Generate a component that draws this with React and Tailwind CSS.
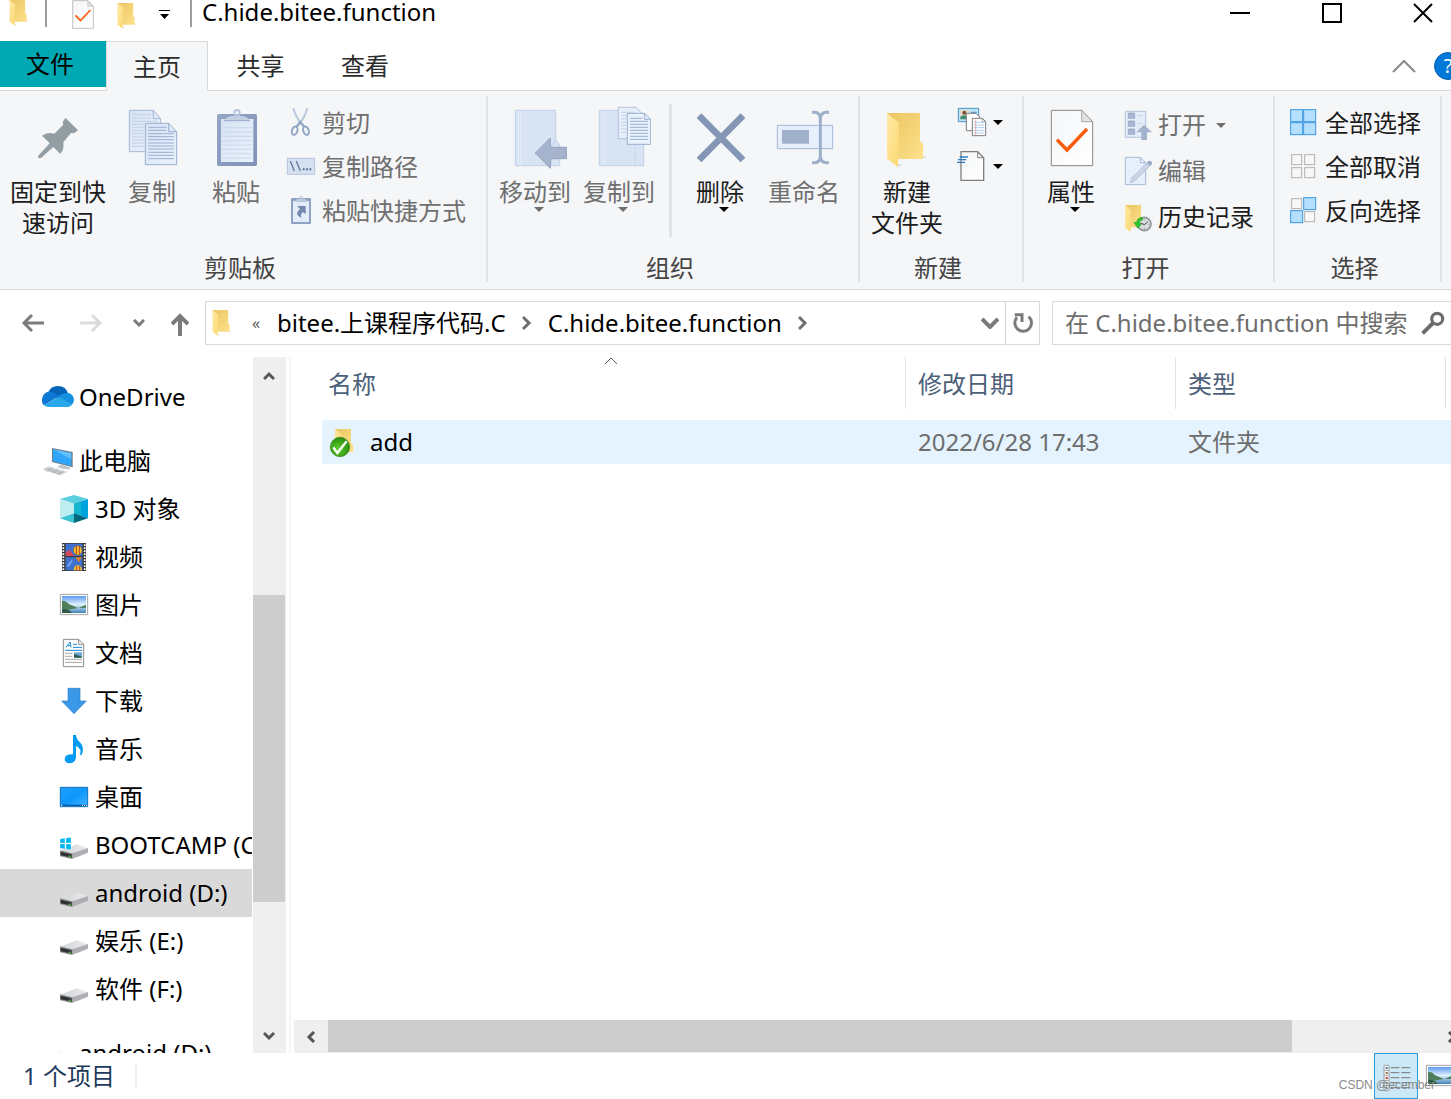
import clsx from 'clsx';

const Icon = ({ box, className = 'size-[30px]', children }) => (
  <svg viewBox={box} className={clsx('shrink-0', className)} fill="none" aria-hidden="true">
    {children}
  </svg>
);

const Caret = ({ className }) => (
  <svg viewBox="0 0 10 5" className={clsx('h-[5px] w-[10px] shrink-0', className)} aria-hidden="true">
    <path d="M0 0H10L5 5Z" fill="currentColor" />
  </svg>
);

/* ---------- shared drawings ---------- */

const Gradients = () => (
  <svg className="absolute size-0" aria-hidden="true">
    <defs>
      <linearGradient id="folderBack" x1="0" y1="0" x2="1" y2="1">
        <stop offset="0" stopColor="#eac562" />
        <stop offset="1" stopColor="#fde18a" />
      </linearGradient>
      <linearGradient id="folderFront" x1="0" y1="0" x2="1" y2="1">
        <stop offset="0" stopColor="#ffeaa8" />
        <stop offset="1" stopColor="#fbd870" />
      </linearGradient>
      <linearGradient id="paper" x1="0" y1="0" x2="1" y2="1">
        <stop offset="0" stopColor="#f4f6f8" />
        <stop offset="1" stopColor="#ffffff" />
      </linearGradient>
      <linearGradient id="bluePaper" x1="0" y1="0" x2="1" y2="1">
        <stop offset="0" stopColor="#d6e2f3" />
        <stop offset="1" stopColor="#eaf2fd" />
      </linearGradient>
      <linearGradient id="board" x1="0" y1="0" x2="1" y2="1">
        <stop offset="0" stopColor="#94a6c6" />
        <stop offset="1" stopColor="#8093b8" />
      </linearGradient>
      <linearGradient id="driveTop" x1="0" y1="0" x2="1" y2="0">
        <stop offset="0" stopColor="#d4d5d8" />
        <stop offset="1" stopColor="#e9eaec" />
      </linearGradient>
      <linearGradient id="sky" x1="0" y1="0" x2="0" y2="1">
        <stop offset="0" stopColor="#5c9bf0" />
        <stop offset="0.5" stopColor="#dff1fc" />
        <stop offset="1" stopColor="#3f84b8" />
      </linearGradient>
      <linearGradient id="desk" x1="0" y1="0" x2="1" y2="1">
        <stop offset="0" stopColor="#1fa2ff" />
        <stop offset="0.5" stopColor="#0f97fd" />
        <stop offset="1" stopColor="#42b4ff" />
      </linearGradient>
      <radialGradient id="okGreen" cx="0.4" cy="0.6" r="0.6">
        <stop offset="0" stopColor="#5fd02c" />
        <stop offset="1" stopColor="#2b8f12" />
      </radialGradient>
    </defs>
  </svg>
);

const FolderShape = () => (
  <>
    <path d="M130 232L143 222H130ZM204 206L216 200L204 198Z" fill="#dcdcdc" />
    <path d="M96 69H195V153L204 162V207H128Z" fill="url(#folderBack)" />
    <path d="M96 69L132 98V184L129 188V232L96 206Z" fill="url(#folderFront)" />
  </>
);

const FolderIcon = ({ className }) => (
  <Icon box="93 66 126 171" className={className}>
    <FolderShape />
  </Icon>
);

const CheckedPage = () => (
  <>
    <path d="M589 61H680L713 95V227H589Z" fill="url(#paper)" stroke="#868686" strokeWidth="3" />
    <path d="M680 61V95H713Z" fill="#e2e3e5" stroke="#868686" strokeWidth="2" />
    <path d="M606 149L636 180L696 117" stroke="#f95b0b" strokeWidth="10" />
  </>
);

/* ---------- large ribbon icons ---------- */

const big = 'size-16';

const PinIcon = () => (
  <Icon box="78 45 192 192" className={big}>
    <path
      d="M197 84L234 121L222 130L213 129L190 157Q193 178 181 192L160 171L123 204L114 204L115 197L149 160L126 137Q142 125 163 131L190 104L188 95Z"
      fill="#939da4"
    />
  </Icon>
);

const CopyIcon = () => (
  <Icon box="360 45 192 192" className={big}>
    <path d="M388 61H460L482 86V185H388Z" fill="url(#bluePaper)" stroke="#a5b8d6" strokeWidth="3" />
    <path d="M460 61V86H482" stroke="#a5b8d6" strokeWidth="3" />
    <path d="M396 74H452M396 84H452M396 94H474M396 103H432M396 112H432M396 122H432M396 131H432M396 141H432M396 150H432M396 159H432M396 169H432" stroke="#c3d1e6" strokeWidth="3" />
    <path d="M436 100H506L530 125V224H436Z" fill="url(#bluePaper)" stroke="#9aafd0" strokeWidth="3" />
    <path d="M506 100V125H530" stroke="#9aafd0" strokeWidth="3" />
    <path d="M445 112H500M445 121H500M445 131H522M445 140H522M445 149H522M445 159H522M445 168H522M445 177H522M445 187H522M445 196H522M445 206H522" stroke="#9aafd0" strokeWidth="3" />
  </Icon>
);

const PasteIcon = () => (
  <Icon box="612 45 192 192" className={big}>
    <rect x="651" y="72" width="120" height="156" rx="5" fill="url(#board)" />
    <path d="M663 87H760V216H663Z" fill="url(#bluePaper)" />
    <path d="M667 113H756M667 126H756M667 139H756M667 152H756M667 165H756M667 178H756M667 191H756M667 204H756" stroke="#c0cfe4" strokeWidth="2" />
    <path d="M672 93H750Q748 82 726 78H696Q674 82 672 93Z" fill="#c3d0e2" />
    <path d="M672 92H750" stroke="#98abc9" strokeWidth="3" />
    <circle cx="711" cy="68" r="8" stroke="#b7c6dc" strokeWidth="6" />
  </Icon>
);

const BookShape = ({ x }) => (
  <g transform={`translate(${x} 0)`}>
    <path d="M1 61H122V150L134 165V227H1Z" fill="#d8e4f3" stroke="#c0d0e6" strokeWidth="3" />
    <path d="M10 66V222M17 66V222" stroke="#eaf1fb" strokeWidth="2" />
    <path d="M109 227V170L122 150L134 165" stroke="#c0d0e6" strokeWidth="2" />
  </g>
);

const MoveToIcon = () => (
  <Icon box="54 45 192 192" className={big}>
    <BookShape x={90} />
    <path d="M151 189L196 144V172H245V206H196V235Z" fill="#a5b3cd" stroke="#91a2c0" strokeWidth="3" />
  </Icon>
);

const CopyToIcon = () => (
  <Icon box="306 45 192 192" className={big}>
    <BookShape x={342} />
    <path d="M400 52H453L470 70V146H400Z" fill="#e6eefa" stroke="#b3c3dc" strokeWidth="3" />
    <path d="M408 67H446M408 77H428M408 87H424M408 97H424M408 107H424M408 117H424M408 127H424" stroke="#c3d1e6" strokeWidth="3" />
    <path d="M427 70H479L497 88V163H427Z" fill="#e9f1fc" stroke="#9aafd0" strokeWidth="3" />
    <path d="M479 70V88H497" stroke="#9aafd0" strokeWidth="3" />
    <path d="M435 85H472M435 94H489M435 103H489M435 112H489M435 121H489M435 130H489M435 139H489M435 148H489" stroke="#9aafd0" strokeWidth="3" />
  </Icon>
);

const DeleteIcon = () => (
  <Icon box="606 45 192 192" className={big}>
    <path d="M639 77L771 210M771 77L639 210" stroke="#8496b6" strokeWidth="20" />
  </Icon>
);

const RenameIcon = () => (
  <Icon box="858 45 192 192" className={big}>
    <path d="M874 106H1040V176H874Z" fill="#e6effb" stroke="#a3b7d5" strokeWidth="3" />
    <path d="M888 120H969V161H888Z" fill="#a0b1cd" />
    <path d="M978 67H985Q1003 67 1003 88V198Q1003 218 985 218H978M1029 67H1022Q1003 67 1003 88M1003 198Q1003 218 1022 218H1029" stroke="#9dafcb" strokeWidth="9" />
  </Icon>
);

const NewFolderIcon = () => (
  <Icon box="60 45 192 192" className={big}>
    <FolderShape />
  </Icon>
);

const PropertiesIcon = () => (
  <Icon box="552 45 192 192" className={big}>
    <CheckedPage />
  </Icon>
);

/* ---------- small ribbon icons ---------- */

const CutIcon = () => (
  <Icon box="858 54 90 90">
    <path d="M880 54Q885 78 906 104M922 54Q917 78 896 104" stroke="#b9c7dc" strokeWidth="6" />
    <ellipse cx="884" cy="122" rx="8" ry="13" transform="rotate(20 884 122)" stroke="#93a6c6" strokeWidth="6" />
    <ellipse cx="918" cy="122" rx="8" ry="13" transform="rotate(-20 918 122)" stroke="#93a6c6" strokeWidth="6" />
    <path d="M889 111L901 96L913 111" stroke="#93a6c6" strokeWidth="7" />
  </Icon>
);

const CopyPathIcon = () => (
  <Icon box="858 186 90 90">
    <path d="M862 205H944V253H862Z" fill="#d5e0f0" stroke="#b5c5de" strokeWidth="3" />
    <path d="M871 213L883 243M889 213L901 243" stroke="#62779c" strokeWidth="4" />
    <path d="M908 235h6v6h-6zM918 235h6v6h-6zM928 235h6v6h-6z" fill="#62779c" />
  </Icon>
);

const PasteShortcutIcon = () => (
  <Icon box="858 318 90 90">
    <rect x="873" y="324" width="60" height="78" rx="3" fill="#8fa2c4" />
    <path d="M879 333H927V396H879Z" fill="#e3ecf9" />
    <path d="M884 336H922Q920 327 911 326H895Q886 327 884 336Z" fill="#b9c8de" />
    <circle cx="903" cy="323" r="4" stroke="#b9c8de" strokeWidth="3" />
    <path d="M892 348H917V373L909 366Q899 372 905 384Q880 372 900 357Z" fill="#7288ae" />
  </Icon>
);

const NewItemIcon = () => (
  <Icon box="306 51 90 90">
    <path d="M310 55H371V95H310Z" fill="#bfe3f8" stroke="#4695c3" strokeWidth="3" />
    <path d="M316 60H342V88H316Z" fill="#e9d9c0" />
    <path d="M316 88V80Q328 70 342 82V88Z" fill="#3b8f78" />
    <circle cx="328" cy="68" r="6" fill="#7a5638" />
    <path d="M348 67H365" stroke="#4695c3" strokeWidth="3" />
    <path d="M334 70H363L374 81V122H334Z" fill="#fff" stroke="#7d7d7d" strokeWidth="3" />
    <path d="M352 85H382L392 95V137H352Z" fill="#fff" stroke="#7d7d7d" strokeWidth="3" />
    <path d="M382 85V95H392" stroke="#7d7d7d" strokeWidth="2" />
    <path d="M356 97H388M356 105H388M356 113H388M356 121H388M356 129H388" stroke="#a9cdf2" strokeWidth="3" />
    <path d="M362 88V135" stroke="#f0938f" strokeWidth="2" />
  </Icon>
);

const EasyAccessIcon = () => (
  <Icon box="303 183 90 90">
    <path d="M315 185H365L383 203V271H315Z" fill="url(#paper)" stroke="#808080" strokeWidth="4" />
    <path d="M365 185V203H383" stroke="#808080" strokeWidth="3" />
    <path d="M311 201H336M306 209H331M303 217H327" stroke="#2f7dbd" strokeWidth="4" />
  </Icon>
);

const OpenIcon = () => (
  <Icon box="42 240 90 90">
    <path d="M46 244H107V322H46Z" fill="#e3ecf8" stroke="#b4c4dd" strokeWidth="3" />
    <path d="M55 249h19v16h-19zM55 273h19v16h-19zM55 297h19v16h-19z" fill="#a7b6d0" stroke="#8ea0c0" strokeWidth="2" />
    <path d="M81 257H99M81 281H99" stroke="#c8d5e8" strokeWidth="3" />
    <path d="M102 284L126 307H111V330H94V307H79Z" fill="#a2b1cc" />
  </Icon>
);

const EditIcon = () => (
  <Icon box="42 378 90 90">
    <path d="M46 382H91L107 398V464H46Z" fill="#e6effb" stroke="#a8bad6" strokeWidth="3" />
    <path d="M91 382V398H107" stroke="#a8bad6" strokeWidth="3" />
    <path d="M61 459L65 444L113 396L124 404L76 451Z" fill="#c9d5e6" stroke="#a8b8d2" strokeWidth="2" />
    <circle cx="119" cy="399" r="7" fill="#9aabc9" />
  </Icon>
);

const HistoryIcon = () => (
  <Icon box="42 516 90 90">
    <path d="M45 525H93V592H60Z" fill="url(#folderBack)" />
    <path d="M45 525L63 540V596L60 605L45 592Z" fill="url(#folderFront)" />
    <circle cx="103" cy="582" r="20" fill="#d9dcdd" stroke="#909698" strokeWidth="5" />
    <path d="M92 579L103 584L114 575" stroke="#454545" strokeWidth="3" />
    <path d="M103 567v4M103 594v4M88 583h3M115 583h4" stroke="#707070" strokeWidth="2" />
    <path d="M97 562Q80 564 80 577H71L83 595L95 582L88 578Q90 570 98 570Z" fill="#2cc02c" stroke="#1d9620" strokeWidth="1" />
  </Icon>
);

// four tiles, each one either picked or empty
const Tiles = ({ picked }) => (
  <Icon box="0 0 90 90">
    {[[5, 5], [44, 5], [5, 44], [44, 44]].map(([x, y], i) =>
      picked[i] ? (
        <rect key={i} x={x} y={y} width="36" height="36" fill="#b4dfff" stroke="#3a97e0" strokeWidth="3" />
      ) : (
        <rect key={i} x={x + 3} y={y + 3} width="30" height="30" fill="#f7f7f7" stroke="#b0b0b0" strokeWidth="3" />
      )
    )}
  </Icon>
);

/* ---------- navigation pane icons ---------- */

const nav = 'size-8';

const OneDriveIcon = () => (
  <Icon box="126 33 96 96" className={nav}>
    <path d="M145 66Q153 48 174 48Q197 48 204 70L172 84L148 70Z" fill="#0364b8" />
    <path d="M145 65Q160 64 178 79L132 106Q124 98 126 86Q130 68 145 65Z" fill="#0f78d4" />
    <path d="M204 69Q221 72 222 90Q221 100 214 106L172 82Q186 68 204 69Z" fill="#1490df" />
    <path d="M132 105L178 80L216 104Q210 111 203 111H145Q137 111 132 105Z" fill="#28a8ea" />
  </Icon>
);

const ComputerIcon = () => (
  <Icon box="126 225 96 96" className={nav}>
    <path d="M156 234L218 246V292L156 276Z" fill="#6d7b85" />
    <path d="M159 238L214 249V288L159 274Z" fill="#2fa6fb" />
    <path d="M159 238L214 249V268Z" fill="#62bffd" />
    <path d="M182 284L196 288L210 292V298L190 297L172 291Z" fill="#bfc4c8" />
    <path d="M127 297L148 289L203 306L178 316Z" fill="#d5d8da" />
    <path d="M134 299L184 313M141 295L190 309M140 304L158 294M156 308L174 298M172 312L190 303" stroke="#9fa4a8" strokeWidth="2" />
  </Icon>
);

const CubeIcon = () => (
  <Icon box="174 369 96 96" className={nav}>
    <path d="M180 387L222 375L264 387L222 401Z" fill="#59cfe0" />
    <path d="M180 387L222 401V430L180 445Z" fill="#c0eef0" />
    <path d="M264 387L222 401V430L264 445Z" fill="#00a3dc" />
    <path d="M222 401L243 394V437L222 430Z" fill="#16b6cf" />
    <path d="M180 445L222 430V459Z" fill="#3ac3d3" />
    <path d="M264 445L222 430V459Z" fill="#02687e" />
  </Icon>
);

const VideoIcon = () => (
  <Icon box="174 513 96 96" className={nav}>
    <path d="M186 519H258V603H186Z" fill="#3b3b3b" />
    <path d="M190 523V603M254 523V603" stroke="#fff" strokeWidth="5" strokeDasharray="5 4" />
    <path d="M197 521H247V558H197ZM197 562H247V601H197Z" fill="#3f72cf" />
    <path d="M197 558V546L210 540L222 558Z" fill="#d8465a" />
    <ellipse cx="233" cy="541" rx="13" ry="14" fill="#f1c12c" stroke="#4a3412" strokeWidth="1" />
    <path d="M229 528V554M238 528V554" stroke="#c0392b" strokeWidth="3" />
    <path d="M226 562H245L237 577Z" fill="#e07b24" />
    <path d="M221 601Q222 586 233 586Q245 586 246 601Z" fill="#f1c12c" />
    <path d="M230 588V601M239 588V601" stroke="#c0392b" strokeWidth="3" />
    <path d="M203 590L216 572" stroke="#6ea0ea" strokeWidth="6" />
  </Icon>
);

const PictureIcon = ({ className = nav }) => (
  <Icon box="174 657 96 96" className={className}>
    <path d="M181 673H263V734H181Z" fill="#fff" stroke="#a3a3a3" strokeWidth="3" />
    <path d="M186 678H258V729H186Z" fill="url(#sky)" />
    <path d="M186 693Q196 690 206 702Q220 708 234 714L186 722Z" fill="#4e7f5a" />
    <path d="M258 704L236 714H258Z" fill="#4e7f5a" />
    <path d="M186 718Q204 714 216 729H186Z" fill="#2d5b45" />
  </Icon>
);

const DocumentIcon = () => (
  <Icon box="174 51 96 96" className={nav}>
    <path d="M190 58H236L251 73V140H190Z" fill="#fdfdfd" stroke="#8b8b8b" strokeWidth="3" />
    <path d="M236 58V73H251" stroke="#8b8b8b" strokeWidth="3" />
    <path d="M198 82L210 66L213 82M202 77H212" stroke="#1787d6" strokeWidth="3" />
    <path d="M219 73H231M219 82H246M195 91H246" stroke="#1787d6" strokeWidth="3" />
    <path d="M195 100H217M195 109H217M195 118H246M195 127H246" stroke="#a9a9a9" strokeWidth="3" />
    <path d="M222 97H246V113H222Z" fill="#6fa6cf" />
    <path d="M222 102L246 110V113H222Z" fill="#2f5d53" />
  </Icon>
);

const DownloadIcon = () => (
  <Icon box="174 195 96 96" className={nav}>
    <path d="M204 205H240V243H259L222 281L185 243H204Z" fill="#3a98e9" stroke="#2b7fcb" strokeWidth="2" />
  </Icon>
);

const MusicIcon = () => (
  <Icon box="174 339 96 96" className={nav}>
    <path d="M219 345H228Q229 358 240 367Q256 384 244 406L240 404Q246 386 228 377V412Q227 429 209 430Q194 429 194 416Q196 402 219 403Z" fill="#059bf4" />
  </Icon>
);

const DesktopIcon = () => (
  <Icon box="174 483 96 96" className={nav}>
    <path d="M181 502H263V560H181Z" fill="url(#desk)" stroke="#0f6fb8" strokeWidth="3" />
    <path d="M182 556H262" stroke="#0b5c9e" strokeWidth="4" />
    <path d="M183 556h4M246 556h3M252 556h3M258 556h3" stroke="#fff" strokeWidth="3" />
  </Icon>
);

const DriveIcon = ({ windows }) => (
  <Icon box="174 141 96 96" className={nav}>
    <path d="M180 206L230 187L264 199L216 216Z" fill="url(#driveTop)" />
    <path d="M216 214L264 198V212L216 231Z" fill="#aeafb2" />
    <path d="M180 205L217 214V231L180 223Z" fill="#8e9093" />
    <path d="M182 209L215 217V227L182 220Z" fill="#2f3133" />
    <path d="M206 221h6v4h-6z" fill="#3bd03b" />
    {windows && (
      <path d="M180 171L195 168V183H180ZM198 168L213 166V183H198ZM180 186H195V201L180 199ZM198 186H213V203L198 201Z" fill="#00b7f1" stroke="#fff" strokeWidth="1" />
    )}
  </Icon>
);

/* ---------- ribbon ---------- */

const BigButton = ({ icon, lines, caret, disabled, className = 'w-[84px]' }) => (
  <button
    type="button"
    disabled={disabled}
    className={clsx('flex flex-col items-center leading-[31px]', className, disabled ? 'text-[#6f6f6f]' : 'text-[#1c1c1c]')}
  >
    <span className="flex h-20 items-center pt-0.5">{icon}</span>
    {lines.map((line) => (
      <span key={line} className="whitespace-nowrap">{line}</span>
    ))}
    {caret && <Caret className={clsx('ml-2', !disabled && 'text-black')} />}
  </button>
);

const SmallButton = ({ icon, label, caret, disabled, className = 'h-11 gap-1.5' }) => (
  <button
    type="button"
    disabled={disabled}
    className={clsx('flex items-center whitespace-nowrap', className, disabled ? 'text-[#6f6f6f]' : 'text-[#1c1c1c]')}
  >
    {icon}
    {label && <span>{label}</span>}
    {caret && <Caret className={clsx(!disabled && 'text-black', label && 'ml-1.5')} />}
  </button>
);

const Group = ({ title, className, inset = 'pl-[5px]', children }) => (
  <section className={clsx('flex shrink-0 flex-col justify-between border-r-2 border-[#e2e3e5]', className)}>
    <div className={clsx('flex', inset)}>{children}</div>
    <h2 className="h-7 pr-1.5 text-center leading-7 text-[#444]">{title}</h2>
  </section>
);

const Ribbon = () => (
  <div className="flex h-[199px] shrink-0 border-b border-[#d9dadc] bg-[#f5f6f8] pt-[5px] pb-[7px]">
    <Group title="剪贴板" className="w-[488px]" inset="pl-0">
      <BigButton icon={<PinIcon />} lines={['固定到快', '速访问']} className="w-[116px]" />
      <BigButton icon={<CopyIcon />} lines={['复制']} disabled className="w-[72px]" />
      <BigButton icon={<PasteIcon />} lines={['粘贴']} disabled className="w-24" />
      <div className="flex flex-col pt-[5px] pl-0.5">
        <SmallButton icon={<CutIcon />} label="剪切" disabled />
        <SmallButton icon={<CopyPathIcon />} label="复制路径" disabled />
        <SmallButton icon={<PasteShortcutIcon />} label="粘贴快捷方式" disabled />
      </div>
    </Group>
    <Group title="组织" className="w-[372px]">
      <BigButton icon={<MoveToIcon />} lines={['移动到']} caret disabled />
      <BigButton icon={<CopyToIcon />} lines={['复制到']} caret disabled />
      <span className="mt-2 mr-1.5 ml-2 h-[133px] w-[3px] bg-[#e2e3e5]" />
      <BigButton icon={<DeleteIcon />} lines={['删除']} caret />
      <BigButton icon={<RenameIcon />} lines={['重命名']} disabled />
    </Group>
    <Group title="新建" className="w-[164px]">
      <BigButton icon={<NewFolderIcon />} lines={['新建', '文件夹']} />
      <div className="flex flex-col pt-1 pl-2">
        <SmallButton icon={<NewItemIcon />} caret />
        <SmallButton icon={<EasyAccessIcon />} caret />
      </div>
    </Group>
    <Group title="打开" className="w-[251px]">
      <BigButton icon={<PropertiesIcon />} lines={['属性']} caret />
      <div className="flex flex-col pt-1.5 pl-[11px]">
        <SmallButton icon={<OpenIcon />} label="打开" caret disabled className="h-[46px] gap-1" />
        <SmallButton icon={<EditIcon />} label="编辑" disabled className="h-[46px] gap-1" />
        <SmallButton icon={<HistoryIcon />} label="历史记录" className="h-[46px] gap-1" />
      </div>
    </Group>
    <Group title="选择" className="w-[167px]" inset="pl-3.5">
      <div className="flex flex-col pt-[5px]">
        <SmallButton icon={<Tiles picked={[1, 1, 1, 1]} />} label="全部选择" />
        <SmallButton icon={<Tiles picked={[0, 0, 0, 0]} />} label="全部取消" />
        <SmallButton icon={<Tiles picked={[0, 1, 1, 0]} />} label="反向选择" />
      </div>
    </Group>
  </div>
);

/* ---------- window chrome ---------- */

const TitleBar = () => (
  <header className="flex h-[41px] shrink-0 items-center pb-4">
    <FolderIcon className="ml-[9px] h-7 w-5" />
    <span className="ml-4 h-7 w-0.5 bg-[#9d9d9d]" />
    <button type="button" aria-label="属性" className="ml-[25px] pt-1">
      <Icon box="585 57 132 174" className="h-[29px] w-[22px]">
        <CheckedPage />
      </Icon>
    </button>
    <button type="button" aria-label="新建文件夹" className="ml-[23px] pt-1.5">
      <FolderIcon className="h-7 w-5" />
    </button>
    <button type="button" aria-label="自定义快速访问工具栏" className="ml-[22px] pt-1">
      <Icon box="0 0 11 9" className="h-[9px] w-[11px]">
        <path d="M0 0H11V1H0ZM1 4H10L5.500 9Z" fill="#000" />
      </Icon>
    </button>
    <span className="ml-5 h-7 w-0.5 bg-[#9d9d9d]" />
    <h1 className="ml-2.5 grow pb-0.5 leading-6 text-black">C.hide.bitee.function</h1>
    <button type="button" aria-label="最小化" className="flex w-[92px] justify-center">
      <Icon box="0 0 20 20" className="size-5"><path d="M0 10H20" stroke="#000" strokeWidth="2" /></Icon>
    </button>
    <button type="button" aria-label="最大化" className="flex w-[91px] justify-center">
      <Icon box="0 0 20 20" className="size-5"><path d="M1 1H19V19H1Z" stroke="#000" strokeWidth="2" /></Icon>
    </button>
    <button type="button" aria-label="关闭" className="flex w-[92px] justify-center">
      <Icon box="0 0 20 20" className="size-5"><path d="M1 1L19 19M19 1L1 19" stroke="#000" strokeWidth="2" /></Icon>
    </button>
  </header>
);

const Tabs = () => (
  <nav className="flex h-[50px] shrink-0 text-[#2b2b2b]">
    <div className="w-[106px] border-b border-[#d9dadc]">
      <button type="button" className="h-[46px] w-full bg-[#00a8b3] pr-1.5 text-black">文件</button>
    </div>
    <button type="button" className="w-[102px] border border-b-0 border-[#d9dadc] bg-[#f5f6f8]">主页</button>
    <div className="flex grow items-center border-b border-[#d9dadc]">
      <button type="button" className="w-[105px]">共享</button>
      <button type="button" className="w-[104px]">查看</button>
      <button type="button" aria-label="折叠功能区" className="ml-auto">
        <Icon box="0 0 24 14" className="h-3.5 w-6">
          <path d="M1 13L12 2L23 13" stroke="#8a8a8a" strokeWidth="2" />
        </Icon>
      </button>
      <button type="button" aria-label="帮助" className="mr-[7px] ml-[18px] size-7 rounded-full border border-[#0a5fae] bg-[#0078d7] text-xl leading-6 text-white">
        ?
      </button>
    </div>
  </nav>
);

const AddressBar = () => (
  <div className="flex h-[67px] shrink-0 items-center pb-px">
    <button type="button" aria-label="后退" className="ml-[21px]">
      <Icon box="0 0 24 20" className="h-5 w-6">
        <path d="M3 10H23M11 2L3 10L11 18" stroke="#7b7b7b" strokeWidth="3" />
      </Icon>
    </button>
    <button type="button" aria-label="前进" disabled className="ml-[34px]">
      <Icon box="0 0 24 20" className="h-5 w-6">
        <path d="M1 10H21M13 2L21 10L13 18" stroke="#dcdcdc" strokeWidth="3" />
      </Icon>
    </button>
    <button type="button" aria-label="最近浏览的位置" className="ml-[30px]">
      <Icon box="0 0 12 8" className="h-2 w-3">
        <path d="M1 1L6 6L11 1" stroke="#7b7b7b" strokeWidth="3" />
      </Icon>
    </button>
    <button type="button" aria-label="上移" className="ml-[26px] pt-0.5">
      <Icon box="0 0 18 24" className="h-6 w-[18px]">
        <path d="M9 24V3M1 12L9 4L17 12" stroke="#7b7b7b" strokeWidth="4" />
      </Icon>
    </button>
    <div className="ml-4 flex h-11 grow items-center border border-[#d9d9d9] text-black">
      <FolderIcon className="ml-1.5 h-7 w-5" />
      <span className="ml-5 w-5 text-base text-[#5a5a5a]">«</span>
      <button type="button" className="ml-[5px]">bitee.上课程序代码.C</button>
      <Icon box="0 0 10 16" className="mx-4 h-4 w-2.5">
        <path d="M1 2L7 8L1 14" stroke="#6e6e6e" strokeWidth="3" />
      </Icon>
      <button type="button">C.hide.bitee.function</button>
      <Icon box="0 0 10 16" className="mx-4 h-4 w-2.5">
        <path d="M1 2L7 8L1 14" stroke="#6e6e6e" strokeWidth="3" />
      </Icon>
      <button type="button" aria-label="上一个位置" className="mr-1.5 ml-auto">
        <Icon box="0 0 18 12" className="h-3 w-[18px]">
          <path d="M1 2L9 10L17 2" stroke="#7b7b7b" strokeWidth="4" />
        </Icon>
      </button>
      <button type="button" aria-label="刷新" className="flex h-full w-[34px] items-center justify-center border-l border-[#d9d9d9] pl-0.5">
        <Icon box="160 66 63 66" className="h-[22px] w-[21px]">
          <path d="M207 80A25 25 0 1 1 172 82" stroke="#7b7b7b" strokeWidth="9" />
          <path d="M165 74H187V96" stroke="#7b7b7b" strokeWidth="9" />
        </Icon>
      </button>
    </div>
    <div className="mr-3 ml-3 flex h-11 w-[405px] shrink-0 items-center border border-[#d9d9d9] pl-3">
      <input
        type="text"
        aria-label="搜索"
        placeholder="在 C.hide.bitee.function 中搜索"
        className="w-[352px] shrink-0 bg-transparent outline-none placeholder:text-[#6d6d6d] placeholder:opacity-100"
      />
      <Icon box="1384 64 74 72" className="ml-1 size-6">
        <circle cx="1434" cy="87" r="17" stroke="#6d6d6d" strokeWidth="10" />
        <path d="M1421 100L1389 132" stroke="#6d6d6d" strokeWidth="12" />
      </Icon>
    </div>
  </div>
);

/* ---------- body ---------- */

const places = [
  { label: 'OneDrive', icon: <OneDriveIcon />, root: true },
  { label: '此电脑', icon: <ComputerIcon />, root: true },
  { label: '3D 对象', icon: <CubeIcon /> },
  { label: '视频', icon: <VideoIcon /> },
  { label: '图片', icon: <PictureIcon /> },
  { label: '文档', icon: <DocumentIcon /> },
  { label: '下载', icon: <DownloadIcon /> },
  { label: '音乐', icon: <MusicIcon /> },
  { label: '桌面', icon: <DesktopIcon /> },
  { label: 'BOOTCAMP (C:)', icon: <DriveIcon windows /> },
  { label: 'android (D:)', icon: <DriveIcon />, active: true },
  { label: '娱乐 (E:)', icon: <DriveIcon /> },
  { label: '软件 (F:)', icon: <DriveIcon /> },
  { label: 'android (D:)', icon: <DriveIcon />, root: true },
];

const Arrow = ({ d }) => (
  <Icon box="0 0 12 12" className="size-3">
    <path d={d} stroke="#555" strokeWidth="3" />
  </Icon>
);

const Sidebar = () => (
  <aside className="flex w-[286px] shrink-0">
    <ul className="mr-px w-[252px] overflow-hidden text-black">
      {places.map(({ label, icon, root, active }, i) => (
        <li key={i} className={clsx(root && 'mt-4')}>
          <a
            href="#"
            className={clsx('flex h-12 items-center gap-[5px] whitespace-nowrap', root ? 'pl-[42px]' : 'pl-[58px]', active && 'bg-[#d9d9d9]')}
          >
            {icon}
            <span>{label}</span>
          </a>
        </li>
      ))}
    </ul>
    <div className="flex grow flex-col bg-[#efefef]">
      <button type="button" aria-label="向上滚动" className="flex h-[34px] items-center justify-center pt-1 pr-px">
        <Arrow d="M1 9L6 4L11 9" />
      </button>
      <span className="grow-[204]" />
      <span className="mr-px grow-[307] bg-[#cdcdcd]" />
      <span className="grow-[117]" />
      <button type="button" aria-label="向下滚动" className="flex h-[34px] items-center justify-center pr-px">
        <Arrow d="M1 3L6 8L11 3" />
      </button>
    </div>
  </aside>
);

const HeadCell = ({ children, sorted }) => (
  <th scope="col" className="h-[63px] p-0 align-top font-normal">
    <div className="relative flex h-[52px] items-center border-r border-[#e2e2e2] pt-px pl-3">
      {children}
      {sorted && (
        <svg viewBox="0 0 14 8" className="absolute top-0 left-1/2 h-2 w-3.5 -translate-x-1/2" fill="none" aria-hidden="true">
          <path d="M1 7L7 1L13 7" stroke="#555" />
        </svg>
      )}
    </div>
  </th>
);

const FileList = () => (
  <main className="flex min-w-0 grow flex-col">
    <div className="grow pl-[22px]">
      <table className="w-full table-fixed border-collapse text-left">
        <colgroup>
          <col />
          <col className="w-[270px]" />
          <col className="w-[270px]" />
          <col className="w-[23px]" />
        </colgroup>
        <thead className="text-[#4c607a]">
          <tr>
            <HeadCell sorted>名称</HeadCell>
            <HeadCell>修改日期</HeadCell>
            <HeadCell>类型</HeadCell>
            <td />
          </tr>
        </thead>
        <tbody className="text-[#6d6d6d]">
          <tr>
            <td className="p-0 pl-1.5">
              <div className="flex h-11 items-center gap-2.5 bg-[#e5f3ff] pl-1.5 text-black">
                <Icon box="144 228 96 96" className="size-8">
                  <path d="M165 237H213V279L220 287V306H180Z" fill="url(#folderBack)" />
                  <path d="M165 237L183 252V275H165Z" fill="url(#folderFront)" />
                  <circle cx="180" cy="291" r="29" fill="url(#okGreen)" stroke="#2a7d18" strokeWidth="2" />
                  <path d="M160 292L172 309L200 274" stroke="#fff" strokeWidth="7" />
                </Icon>
                add
              </div>
            </td>
            <td className="bg-[#e5f3ff] py-0 pl-3">2022/6/28 17:43</td>
            <td className="bg-[#e5f3ff] py-0 pl-3">文件夹</td>
            <td className="bg-[#e5f3ff]" />
          </tr>
        </tbody>
      </table>
    </div>
    <div className="flex h-[33px] shrink-0 bg-[#efefef]">
      <button type="button" aria-label="向左滚动" className="flex w-[34px] items-center justify-center">
        <Arrow d="M9 1L4 6L9 11" />
      </button>
      <span className="mb-px grow-[964] bg-[#cdcdcd]" />
      <span className="grow-[143]" />
      <button type="button" aria-label="向右滚动" className="flex w-[34px] items-center justify-center">
        <Arrow d="M3 1L8 6L3 11" />
      </button>
    </div>
  </main>
);

const StatusBar = () => (
  <footer className="flex h-[46px] shrink-0 items-center text-[#1e395b]">
    <span className="ml-[23px]">1 个项目</span>
    <span className="ml-5 h-[22px] w-0.5 bg-[#f0f0f0]" />
    <button type="button" aria-label="详细信息" className="ml-auto flex h-full w-11 items-center justify-center border border-[#26a0da] bg-[#cbe8f6] pt-1 pl-0.5">
      <Icon box="0 0 84 84" className="size-7">
        <path d="M3 4H18V80H3Z" fill="#fff" stroke="#a0a0a0" strokeWidth="3" />
        <path d="M3 19H18M3 34H18M3 49H18M3 65H18" stroke="#a0a0a0" strokeWidth="3" />
        <path d="M8 9h6v6h-6z" fill="#3d6f9c" />
        <path d="M8 24h6v6h-6z" fill="#8b6a4a" />
        <path d="M8 39h6v6h-6z" fill="#c2261c" />
        <path d="M8 54h6v6h-6zM8 70h6v6h-6z" fill="#3f6f8f" />
        <path d="M23 11H49M55 11H82M23 26H49M55 26H82M23 41H49M55 41H82M23 56H49M55 56H82M23 71H49M55 71H82" stroke="#777" strokeWidth="3" />
      </Icon>
    </button>
    <button type="button" aria-label="大图标" className="mr-[7px] flex h-full w-11 items-center justify-center">
      <PictureIcon />
    </button>
  </footer>
);

export default function App() {
  return (
    <div className="relative h-screen overflow-hidden bg-white font-['Noto_Sans','Noto_Sans_CJK_SC',sans-serif] text-2xl">
      <Gradients />
      <div className="-mr-[18px] flex h-full flex-col">
        <TitleBar />
        <Tabs />
        <Ribbon />
        <AddressBar />
        <div className="flex min-h-0 grow">
          <Sidebar />
          <span className="mx-[3px] w-0.5 shrink-0 bg-[#f6f6f6]" />
          <FileList />
        </div>
        <StatusBar />
      </div>
      <p className="absolute right-4 bottom-1.5 font-['Liberation_Sans',sans-serif] text-xs leading-4 text-[#8a8a8a]">CSDN @ecember</p>
    </div>
  );
}
